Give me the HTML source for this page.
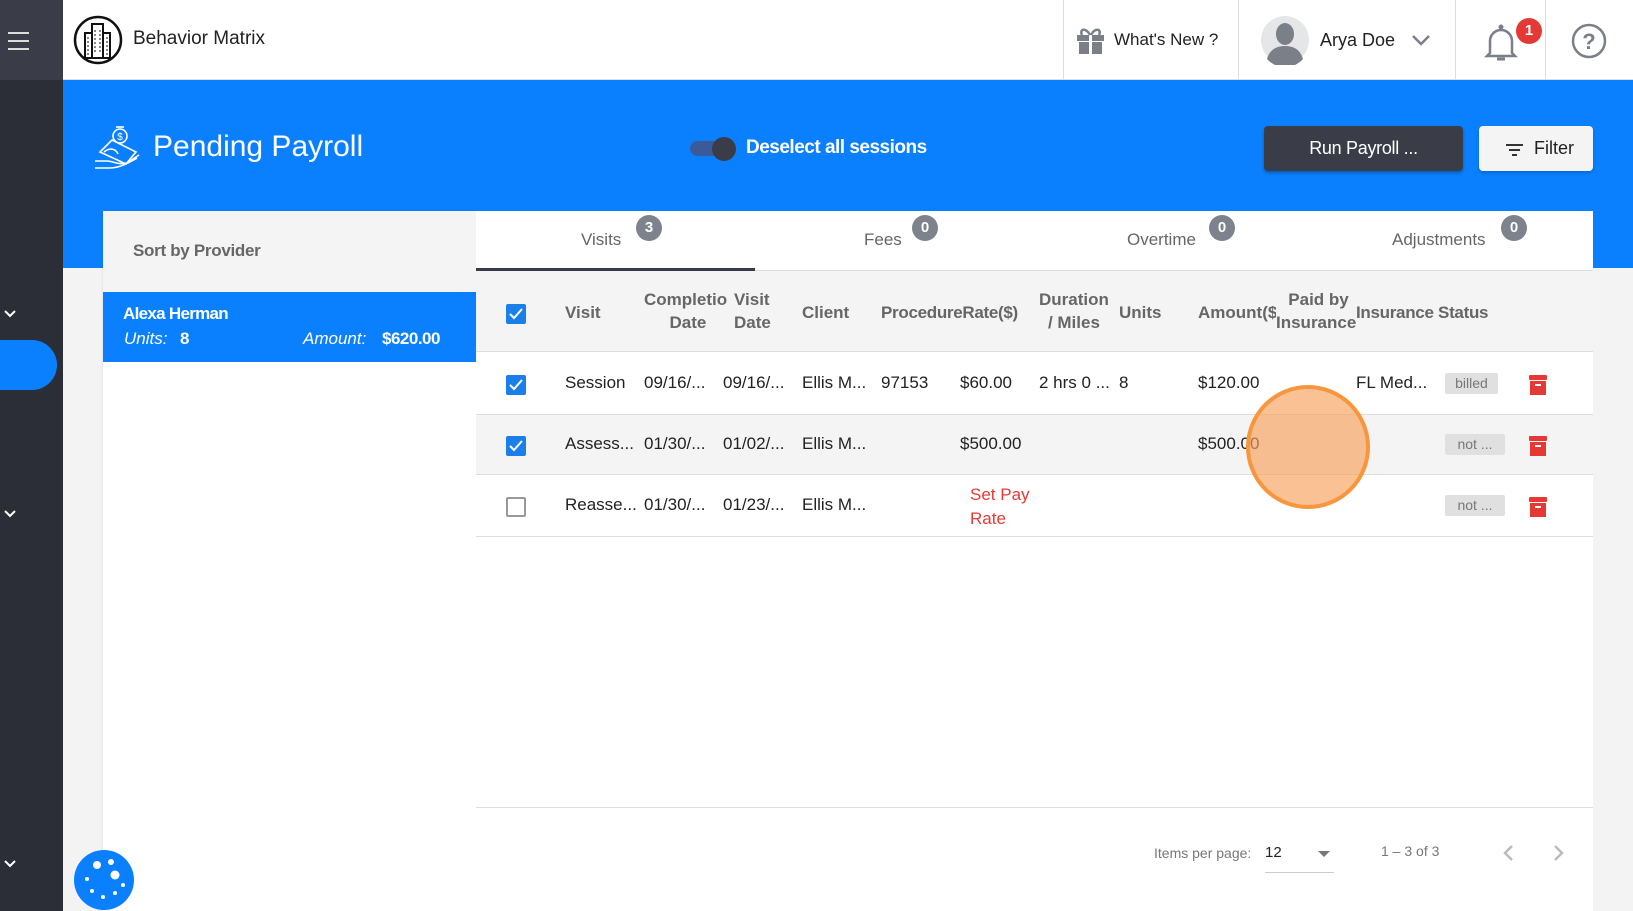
<!DOCTYPE html>
<html><head><meta charset="utf-8">
<style>
*{box-sizing:border-box;margin:0;padding:0}
body{width:1633px;height:911px;overflow:hidden;font-family:"Liberation Sans",sans-serif;background:#f3f3f3;position:relative;color:#222}
.abs{position:absolute}
.sb{left:0;top:0;width:63px;height:911px;background:#2b2e36}
.sbtop{left:0;top:0;width:63px;height:80px;background:#3a3d48}
.hdr{left:63px;top:0;width:1570px;height:80px;background:#fff;border-bottom:1px solid #ddd}
.vd{top:0;width:1px;height:80px;background:#ddd}
.band{left:63px;top:80px;width:1570px;height:188px;background:#0a80ff}
.t{position:absolute;white-space:nowrap}
.hc{font-weight:bold;color:#666;font-size:17px;line-height:23px}
.cell{font-size:17px;color:#222}
.cb{position:absolute;left:506px;width:20px;height:20px;border-radius:2px;background:#1a7fe8}
.cb svg{position:absolute;left:2px;top:2px}
.cbe{background:#fff;border:2px solid #999}
.pill{position:absolute;left:1445px;width:60px;height:21px;background:#e0e0e0;color:#777;font-size:14px;text-align:center;line-height:21px;border-radius:2px}
.badge{position:absolute;width:26px;height:26px;border-radius:50%;background:#7d828c;color:#fff;font-weight:bold;font-size:15px;text-align:center;line-height:26px}
.tab{position:absolute;top:230px;font-size:17px;color:#666}
</style></head><body>
<div class="abs sb"></div>
<div class="abs sbtop"></div>
<!-- hamburger -->
<div class="abs" style="left:8px;top:32px;width:21px;height:2px;background:#ddd"></div>
<div class="abs" style="left:8px;top:40px;width:21px;height:2px;background:#ddd"></div>
<div class="abs" style="left:8px;top:48px;width:21px;height:2px;background:#ddd"></div>
<!-- sidebar chevrons -->
<svg class="abs" style="left:3px;top:309px" width="14" height="10"><path d="M2 2l5 5 5-5" stroke="#fff" stroke-width="2" fill="none"/></svg>
<svg class="abs" style="left:3px;top:509px" width="14" height="10"><path d="M2 2l5 5 5-5" stroke="#fff" stroke-width="2" fill="none"/></svg>
<svg class="abs" style="left:3px;top:859px" width="14" height="10"><path d="M2 2l5 5 5-5" stroke="#fff" stroke-width="2" fill="none"/></svg>
<div class="abs" style="left:0;top:340px;width:57px;height:50px;background:#0a80ff;border-radius:0 25px 25px 0"></div>

<div class="abs hdr"></div>
<svg class="abs" style="left:73px;top:15px" width="50" height="50"><circle cx="25" cy="25" r="23" fill="#fff" stroke="#111" stroke-width="2.5"/><rect x="19" y="9" width="11" height="34" fill="none" stroke="#111" stroke-width="2"/><rect x="12" y="18" width="7" height="25" fill="none" stroke="#111" stroke-width="2"/><rect x="30" y="18" width="7" height="25" fill="none" stroke="#111" stroke-width="2"/><path d="M22 15v24M27 15v24M15 22v18M34 22v18" stroke="#111" stroke-width="1" stroke-dasharray="2 2"/></svg>
<div class="t" style="left:133px;top:28px;font-size:19px;color:#222">Behavior Matrix</div>
<div class="abs vd" style="left:1063px"></div>
<div class="abs vd" style="left:1238px"></div>
<div class="abs vd" style="left:1455px"></div>
<div class="abs vd" style="left:1545px"></div>
<svg class="abs" style="left:1076px;top:26px" width="30" height="29"><rect x="1" y="9" width="27" height="6" fill="#7b7f88"/><rect x="3" y="16" width="23" height="12" fill="#7b7f88"/><rect x="13" y="9" width="3" height="19" fill="#fff"/><path d="M14 9c-4-8-11-6-8 0M15 9c4-8 11-6 8 0" stroke="#7b7f88" stroke-width="2.5" fill="none"/></svg>
<div class="t" style="left:1114px;top:30px;font-size:17px;color:#222">What's New ?</div>
<svg class="abs" style="left:1260px;top:15px" width="50" height="50"><circle cx="25" cy="25" r="24" fill="#e5e6e8"/><ellipse cx="25" cy="19" rx="9" ry="11" fill="#7b7f88"/><path d="M7 44c3-10 10-13 18-13s15 3 18 13a24 24 0 0 1-36 0z" fill="#7b7f88"/></svg>
<div class="t" style="left:1320px;top:30px;font-size:18px;color:#222">Arya Doe</div>
<svg class="abs" style="left:1411px;top:33px" width="20" height="14"><path d="M2 3l8 8 8-8" stroke="#7b7f88" stroke-width="2.5" fill="none"/></svg>
<svg class="abs" style="left:1484px;top:22px" width="34" height="40"><path d="M17 4a2 2 0 0 1 0 0M6 31V19a11 11 0 0 1 22 0v12l3 3H3z" stroke="#7b7f88" stroke-width="2.5" fill="none"/><circle cx="17" cy="5" r="2.5" fill="#7b7f88"/><path d="M13 37h8" stroke="#7b7f88" stroke-width="3"/></svg>
<div class="abs" style="left:1516px;top:18px;width:26px;height:26px;border-radius:50%;background:#e53935;color:#fff;font-weight:bold;font-size:15px;text-align:center;line-height:26px">1</div>
<svg class="abs" style="left:1571px;top:23px" width="36" height="36"><circle cx="18" cy="18" r="16" fill="none" stroke="#7b7f88" stroke-width="2.5"/><text x="18" y="26" text-anchor="middle" font-family="Liberation Sans" font-weight="bold" font-size="22" fill="#7b7f88">?</text></svg>

<div class="abs band"></div>
<svg class="abs" style="left:94px;top:126px" width="48" height="46" fill="none" stroke="#fff" stroke-width="1.6"><circle cx="26" cy="10" r="7"/><text x="26" y="14" font-size="10" fill="#fff" stroke="none" text-anchor="middle" font-family="Liberation Sans">$</text><path d="M22 1h8"/><path d="M6 26l12-12 24 12-10 12z"/><path d="M10 26c6-5 12-3 14 2M1 35h12c6 0 10 4 20 2l12-8M1 42h14c8 0 14-2 28-10"/></svg>
<div class="t" style="left:153px;top:130px;font-size:30px;color:#fff">Pending Payroll</div>
<div class="abs" style="left:690px;top:141px;width:40px;height:15px;border-radius:8px;background:#3a5a9a"></div>
<div class="abs" style="left:712px;top:137px;width:24px;height:24px;border-radius:50%;background:#3a3d48"></div>
<div class="t" style="left:746px;top:137px;font-size:19px;font-weight:bold;color:#fff;letter-spacing:-0.5px">Deselect all sessions</div>
<div class="abs" style="left:1264px;top:126px;width:199px;height:45px;background:#3a3d48;border-radius:4px;color:#fff;font-size:18px;text-align:center;line-height:45px;box-shadow:0 2px 3px rgba(0,0,0,.3);letter-spacing:-0.3px">Run Payroll ...</div>
<div class="abs" style="left:1479px;top:126px;width:114px;height:45px;background:#f4f4f4;border-radius:4px;box-shadow:0 2px 3px rgba(0,0,0,.2)"></div>
<svg class="abs" style="left:1505px;top:143px" width="20" height="14"><path d="M1 2h17M4 7h11M7 12h5" stroke="#333" stroke-width="2"/></svg>
<div class="t" style="left:1534px;top:138px;font-size:18px;color:#222">Filter</div>

<!-- left panel -->
<div class="abs" style="left:103px;top:211px;width:373px;height:700px;background:#fff;box-shadow:0 1px 3px rgba(0,0,0,.1)"></div>
<div class="abs" style="left:103px;top:211px;width:373px;height:81px;background:#f4f4f4"></div>
<div class="t" style="left:133px;top:241px;font-size:17px;font-weight:bold;color:#666;letter-spacing:-0.3px">Sort by Provider</div>
<div class="abs" style="left:103px;top:292px;width:373px;height:70px;background:#0a80ff"></div>
<div class="t" style="left:123px;top:304px;font-size:17px;font-weight:bold;color:#fff;letter-spacing:-0.7px">Alexa Herman</div>
<div class="t" style="left:124px;top:329px;font-size:17px;font-style:italic;color:#fff">Units:</div>
<div class="t" style="left:180px;top:329px;font-size:17px;font-weight:bold;color:#fff">8</div>
<div class="t" style="left:303px;top:329px;font-size:17px;font-style:italic;color:#fff">Amount:</div>
<div class="t" style="left:382px;top:329px;font-size:17px;font-weight:bold;color:#fff;letter-spacing:-0.5px">$620.00</div>

<!-- right card -->
<div class="abs" style="left:476px;top:211px;width:1117px;height:700px;background:#fff"></div>
<div class="abs" style="left:476px;top:270px;width:1117px;height:1px;background:#ddd"></div>
<div class="abs" style="left:476px;top:268px;width:279px;height:3px;background:#3a3d48"></div>
<div class="tab" style="left:581px">Visits</div><div class="badge" style="left:636px;top:215px">3</div>
<div class="tab" style="left:864px">Fees</div><div class="badge" style="left:912px;top:215px">0</div>
<div class="tab" style="left:1127px">Overtime</div><div class="badge" style="left:1209px;top:215px">0</div>
<div class="tab" style="left:1392px">Adjustments</div><div class="badge" style="left:1501px;top:215px">0</div>

<div class="abs" style="left:476px;top:271px;width:1117px;height:81px;background:#f4f4f4;border-bottom:1px solid #ddd"></div>
<div class="abs" style="left:476px;top:414px;width:1117px;height:61px;background:#f4f4f4;border-top:1px solid #ddd;border-bottom:1px solid #ddd"></div>
<div class="abs" style="left:476px;top:536px;width:1117px;height:1px;background:#ddd"></div>

<div class="cb" style="top:304px"><svg width="16" height="16"><path d="M2 8l4 4 8-9" stroke="#fff" stroke-width="2" fill="none"/></svg></div>
<div class="t hc" style="left:565px;top:301px">Visit</div>
<div class="t hc" style="left:644px;top:288px;text-align:center">Completio<br>&nbsp;Date</div>
<div class="t hc" style="left:734px;top:288px">Visit<br>Date</div>
<div class="t hc" style="left:802px;top:301px">Client</div>
<div class="t hc" style="left:881px;top:301px;letter-spacing:-0.3px">ProcedureRate($)</div>
<div class="t hc" style="left:1039px;top:288px;text-align:center">Duration<br>/ Miles</div>
<div class="t hc" style="left:1119px;top:301px">Units</div>
<div class="t hc" style="left:1198px;top:301px">Amount($</div>
<div class="t hc" style="left:1276px;top:288px;text-align:center;background:#f4f4f4">&nbsp;Paid by<br>Insurance</div>
<div class="t hc" style="left:1356px;top:301px;letter-spacing:-0.3px">Insurance Status</div>

<div class="cb" style="top:375px"><svg width="16" height="16"><path d="M2 8l4 4 8-9" stroke="#fff" stroke-width="2" fill="none"/></svg></div>
<div class="cb" style="top:436px"><svg width="16" height="16"><path d="M2 8l4 4 8-9" stroke="#fff" stroke-width="2" fill="none"/></svg></div>
<div class="cb cbe" style="top:497px"></div>

<div class="t cell" style="left:565px;top:373px">Session</div>
<div class="t cell" style="left:644px;top:373px">09/16/...</div>
<div class="t cell" style="left:723px;top:373px">09/16/...</div>
<div class="t cell" style="left:802px;top:373px">Ellis M...</div>
<div class="t cell" style="left:881px;top:373px">97153</div>
<div class="t cell" style="left:960px;top:373px">$60.00</div>
<div class="t cell" style="left:1039px;top:373px">2 hrs 0 ...</div>
<div class="t cell" style="left:1119px;top:373px">8</div>
<div class="t cell" style="left:1198px;top:373px">$120.00</div>
<div class="t cell" style="left:1356px;top:373px">FL Med...</div>
<div class="pill" style="top:373px;width:53px">billed</div>

<div class="t cell" style="left:565px;top:434px">Assess...</div>
<div class="t cell" style="left:644px;top:434px">01/30/...</div>
<div class="t cell" style="left:723px;top:434px">01/02/...</div>
<div class="t cell" style="left:802px;top:434px">Ellis M...</div>
<div class="t cell" style="left:960px;top:434px">$500.00</div>
<div class="t cell" style="left:1198px;top:434px">$500.00</div>
<div class="pill" style="top:434px">not ...</div>

<div class="t cell" style="left:565px;top:495px">Reasse...</div>
<div class="t cell" style="left:644px;top:495px">01/30/...</div>
<div class="t cell" style="left:723px;top:495px">01/23/...</div>
<div class="t cell" style="left:802px;top:495px">Ellis M...</div>
<div class="t" style="left:970px;top:483px;font-size:17px;color:#e53935;line-height:24px">Set Pay<br>Rate</div>
<div class="pill" style="top:495px">not ...</div>

<svg class="abs" style="left:1528px;top:374px" width="20" height="22"><rect x="1" y="1" width="18" height="5" rx="1" fill="#e53935"/><rect x="2" y="7" width="16" height="14" fill="#e53935"/><rect x="7" y="10" width="6" height="2" fill="#fff"/></svg>
<svg class="abs" style="left:1528px;top:435px" width="20" height="22"><rect x="1" y="1" width="18" height="5" rx="1" fill="#e53935"/><rect x="2" y="7" width="16" height="14" fill="#e53935"/><rect x="7" y="10" width="6" height="2" fill="#fff"/></svg>
<svg class="abs" style="left:1528px;top:496px" width="20" height="22"><rect x="1" y="1" width="18" height="5" rx="1" fill="#e53935"/><rect x="2" y="7" width="16" height="14" fill="#e53935"/><rect x="7" y="10" width="6" height="2" fill="#fff"/></svg>

<div class="abs" style="left:1246px;top:385px;width:124px;height:124px;border-radius:50%;background:rgba(248,160,90,.65);border:4px solid #f7963c"></div>

<div class="abs" style="left:476px;top:807px;width:1117px;height:1px;background:#ddd"></div>
<div class="t" style="left:1154px;top:845px;font-size:14px;color:#777">Items per page:</div>
<div class="t" style="left:1265px;top:844px;font-size:15px;color:#222">12</div>
<svg class="abs" style="left:1317px;top:850px" width="14" height="8"><path d="M1 1h12L7 7z" fill="#777"/></svg>
<div class="abs" style="left:1265px;top:872px;width:69px;height:1px;background:#ccc"></div>
<div class="t" style="left:1381px;top:843px;font-size:14px;color:#777">1 – 3 of 3</div>
<svg class="abs" style="left:1502px;top:844px" width="12" height="18"><path d="M10 2L3 9l7 7" stroke="#bbb" stroke-width="2.5" fill="none"/></svg>
<svg class="abs" style="left:1553px;top:844px" width="12" height="18"><path d="M2 2l7 7-7 7" stroke="#bbb" stroke-width="2.5" fill="none"/></svg>

<!-- cookie button -->
<svg class="abs" style="left:73px;top:849px" width="62" height="62"><circle cx="31" cy="31" r="30" fill="#0a80ff"/><circle cx="24" cy="16" r="4" fill="#fff"/><circle cx="38" cy="13" r="3" fill="#fff"/><circle cx="42" cy="26" r="4.5" fill="#fff"/><circle cx="14" cy="30" r="2" fill="#fff"/><circle cx="19" cy="42" r="2" fill="#fff"/><circle cx="30" cy="48" r="2" fill="#fff"/><circle cx="42" cy="44" r="2" fill="#fff"/><circle cx="50" cy="36" r="2" fill="#fff"/></svg>
</body></html>
